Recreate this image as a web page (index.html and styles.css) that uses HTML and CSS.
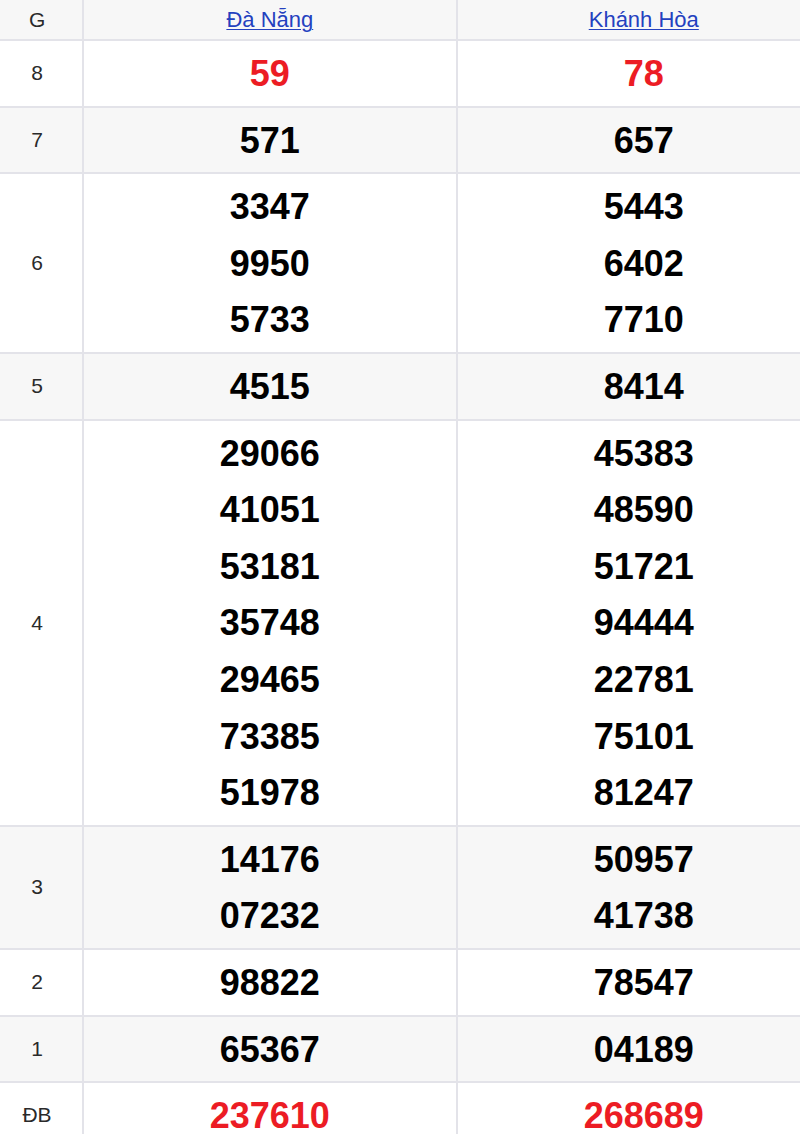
FILE: index.html
```html
<!DOCTYPE html>
<html lang="vi">
<head>
<meta charset="utf-8">
<title>Kết quả xổ số</title>
<link rel="stylesheet" href="styles.css">
</head>
<body>
<table class="kq">
  <colgroup>
    <col class="c-label">
    <col class="c-prov">
    <col class="c-prov">
  </colgroup>
  <thead>
    <tr class="alt">
      <th class="label">G</th>
      <th><a href="#">Đà Nẵng</a></th>
      <th><a href="#">Khánh Hòa</a></th>
    </tr>
  </thead>
  <tbody>
    <tr>
      <td class="label">8</td>
      <td class="num red"><div>59</div></td>
      <td class="num red"><div>78</div></td>
    </tr>
    <tr class="alt">
      <td class="label">7</td>
      <td class="num"><div>571</div></td>
      <td class="num"><div>657</div></td>
    </tr>
    <tr>
      <td class="label">6</td>
      <td class="num"><div>3347</div><div>9950</div><div>5733</div></td>
      <td class="num"><div>5443</div><div>6402</div><div>7710</div></td>
    </tr>
    <tr class="alt">
      <td class="label">5</td>
      <td class="num"><div>4515</div></td>
      <td class="num"><div>8414</div></td>
    </tr>
    <tr>
      <td class="label">4</td>
      <td class="num"><div>29066</div><div>41051</div><div>53181</div><div>35748</div><div>29465</div><div>73385</div><div>51978</div></td>
      <td class="num"><div>45383</div><div>48590</div><div>51721</div><div>94444</div><div>22781</div><div>75101</div><div>81247</div></td>
    </tr>
    <tr class="alt">
      <td class="label">3</td>
      <td class="num"><div>14176</div><div>07232</div></td>
      <td class="num"><div>50957</div><div>41738</div></td>
    </tr>
    <tr>
      <td class="label">2</td>
      <td class="num"><div>98822</div></td>
      <td class="num"><div>78547</div></td>
    </tr>
    <tr class="alt">
      <td class="label">1</td>
      <td class="num"><div>65367</div></td>
      <td class="num"><div>04189</div></td>
    </tr>
    <tr>
      <td class="label">ĐB</td>
      <td class="num red"><div>237610</div></td>
      <td class="num red"><div>268689</div></td>
    </tr>
  </tbody>
</table>
</body>
</html>
```

FILE: styles.css
```css
html, body {
  margin: 0;
  padding: 0;
  overflow: hidden;
  background: #fff;
}

body {
  font-family: "Liberation Sans", Arial, sans-serif;
  color: #222;
}

.kq {
  width: 830px;
  table-layout: fixed;
  border-collapse: collapse;
  border-style: hidden;
}

.c-label { width: 83px; }
.c-prov { width: 373px; }

.kq th,
.kq td {
  border: 2px solid #e3e3e9;
  text-align: center;
  vertical-align: middle;
  padding: 0;
}

.kq th {
  height: 39px;
  font-weight: normal;
  font-size: 22px;
  line-height: 26px;
}

.kq th a {
  color: #2441bf;
  text-decoration: underline;
  text-decoration-thickness: 1px;
  text-underline-offset: 2px;
}

.alt th,
.alt td {
  background: #f7f7f7;
}

.kq .label {
  padding-right: 8px;
  font-size: 21px;
  color: #2a2a2a;
}

.kq td.num {
  padding: 5px 0 3px 0;
  font-size: 36px;
  font-weight: bold;
  color: #000;
}

.num div {
  line-height: 56.6px;
}

.kq td.num.red {
  color: #ec1c24;
}
```
